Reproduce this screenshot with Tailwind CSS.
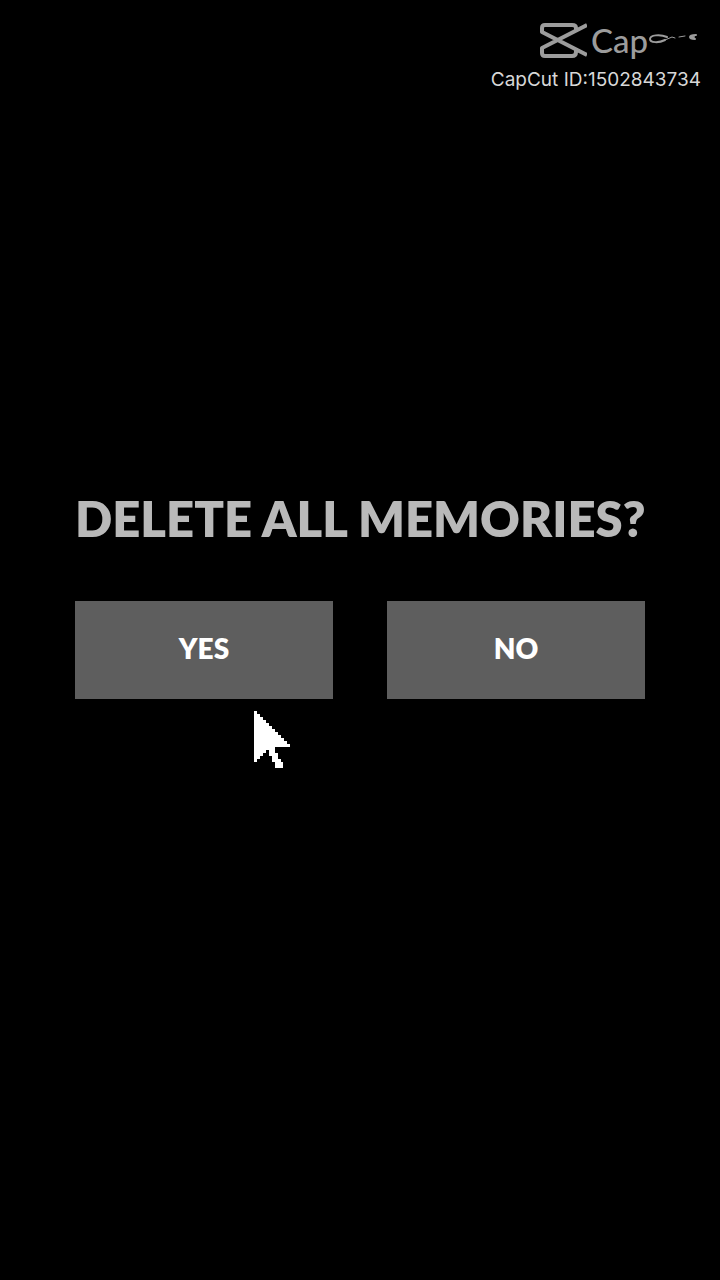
<!DOCTYPE html>
<html lang="en">
<head>
<meta charset="utf-8">
<meta name="viewport" content="width=device-width, initial-scale=1">
<title>Delete all memories?</title>
<script src="https://cdn.jsdelivr.net/npm/@tailwindcss/browser@4"></script>
</head>
<body class="relative flex min-h-screen flex-col justify-center bg-black pb-[111px] font-['Lato',sans-serif]">
  <header class="absolute top-5 right-[19px] flex flex-col items-end gap-2 font-['Inter',sans-serif] text-[#d8d8d8]">
    <div class="flex h-10 items-center text-[#9c9c9c]">
      <svg class="mr-1 h-10 w-[50px]" viewBox="0 0 50 40" fill="none" stroke="currentColor" stroke-width="4" stroke-linejoin="round" aria-hidden="true">
        <path d="M50 5 5 28V33Q5 36 8 36H35Q39 36 39 32V28M50 35 5 12V8Q5 5 8 5H35Q39 5 39 8V12"/>
      </svg>
      <span class="font-['Lato',sans-serif] text-[33px] leading-10 font-medium">Cap</span>
      <svg class="h-10 w-[53px]" viewBox="0 0 53 40" fill="none" stroke="currentColor" stroke-linecap="round" aria-hidden="true">
        <path stroke-width="2" d="M19 17C12 14 2 15 2 19C2 23 11 23 17 20"/>
        <path stroke-width="1" d="M17 20 24 17 27 18M31 17 37 16"/>
        <path stroke-width="2" d="M48 15Q42 15 42 17Q42 19 47 19M43 17H46"/>
      </svg>
    </div>
    <p class="text-[19px] leading-6">CapCut ID:1502843734</p>
  </header>
  <main class="relative px-[75px] pt-5">
    <h1 class="text-center text-[49px] leading-14 font-extrabold whitespace-nowrap text-[#b9b9b9]">DELETE ALL MEMORIES?</h1>
    <div class="mt-[55px] grid grid-cols-2 gap-[54px]">
      <button type="button" class="h-[98px] bg-[#5e5e5e] pb-1 text-[28px] leading-8 font-extrabold text-white">YES</button>
      <button type="button" class="h-[98px] bg-[#5e5e5e] pb-1 text-[28px] leading-8 font-extrabold text-white">NO</button>
    </div>
    <svg class="absolute top-full left-[254px] mt-3 h-[57px] w-9" viewBox="0 0 12 19" fill="#fff" shape-rendering="crispEdges" aria-hidden="true">
      <path d="M0 0H1V1H2V2H3V3H4V4H5V5H6V6H7V7H8V8H9V9H10V10H11V11H12V12H7V14H8V16H9V17H9.500V19H7V17H6V15H5V13H4V14H3V15H2V16H1V17H0Z"/>
    </svg>
  </main>
</body>
</html>
